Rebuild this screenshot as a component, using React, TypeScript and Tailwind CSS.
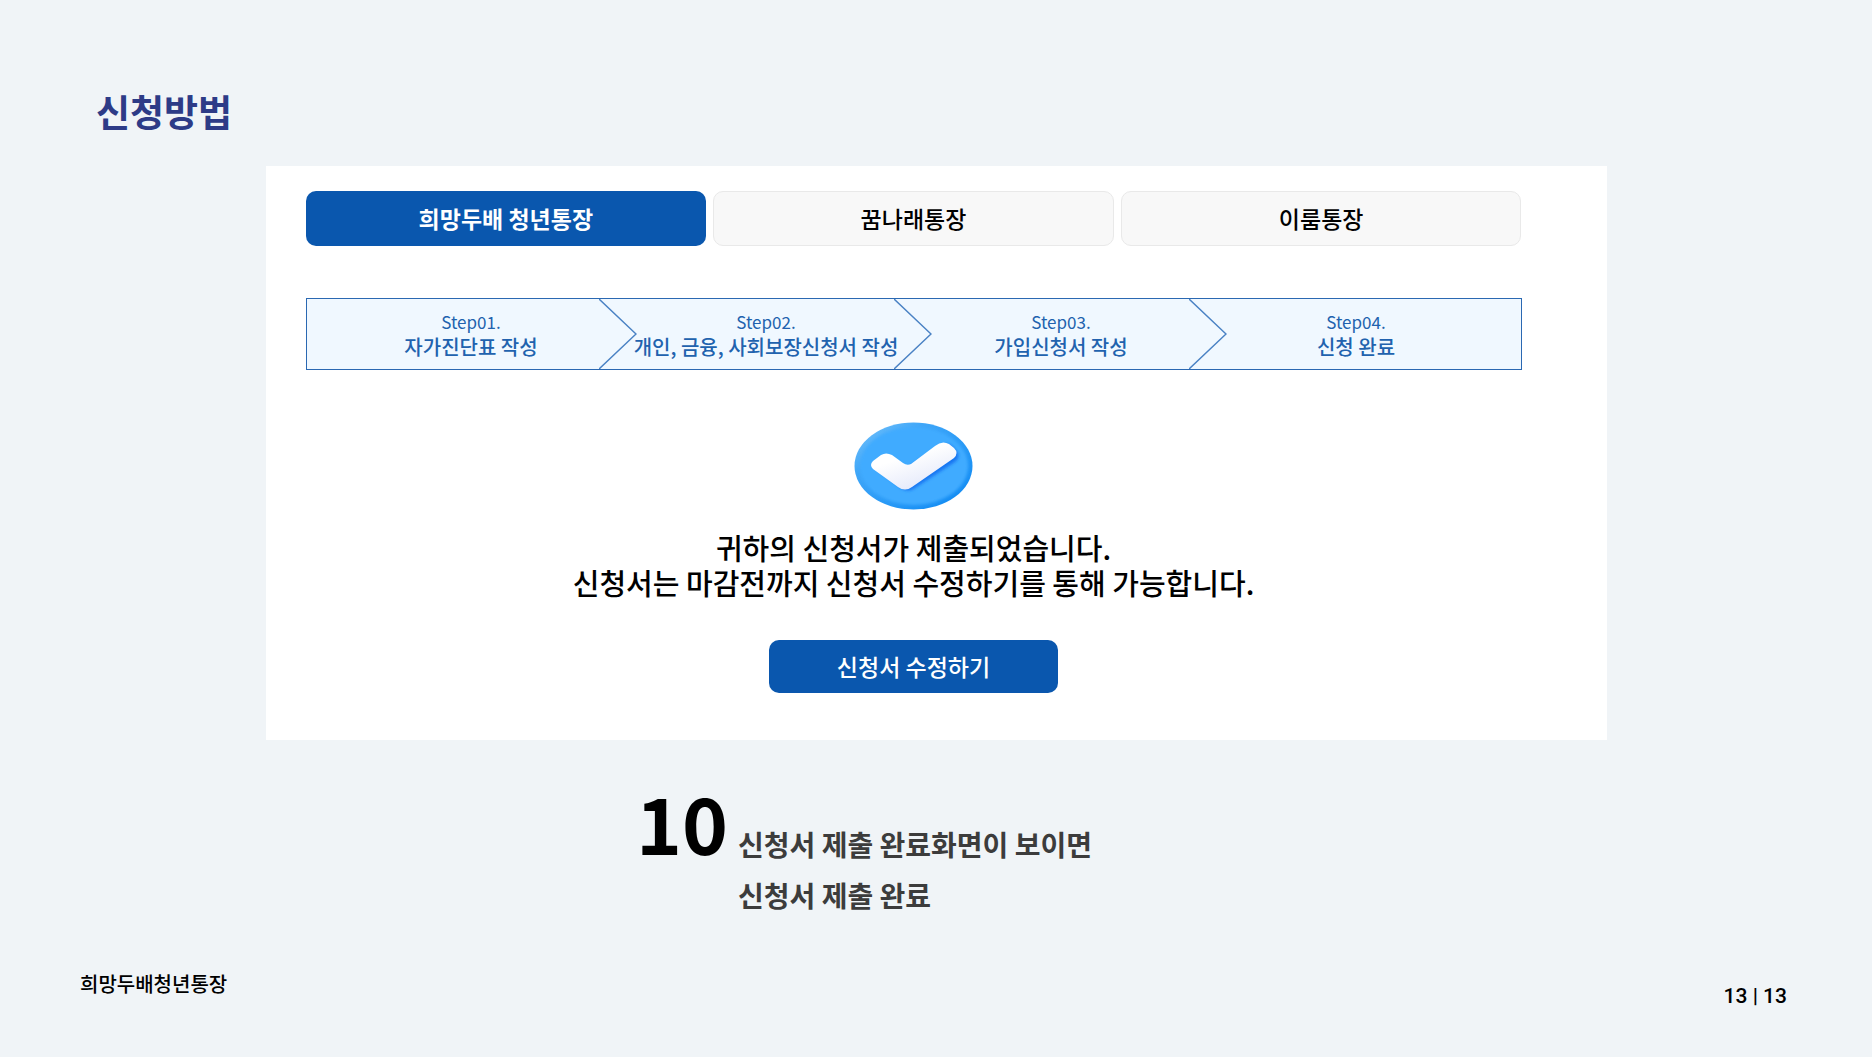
const accounts = ['희망두배 청년통장', '꿈나래통장', '이룸통장'];

const steps = [
  { no: 'Step01.', label: '자가진단표 작성' },
  { no: 'Step02.', label: '개인, 금융, 사회보장신청서 작성' },
  { no: 'Step03.', label: '가입신청서 작성' },
  { no: 'Step04.', label: '신청 완료' },
];

function CheckBadge() {
  return (
    <svg viewBox="0 0 119 88" className="w-[119px] h-[88px]" aria-hidden="true">
      <defs>
        <linearGradient id="rim" x1="0" y1="0" x2="1" y2="1">
          <stop offset="0" stopColor="#7cc6fb" />
          <stop offset="0.3" stopColor="#3fa6f8" />
          <stop offset="0.75" stopColor="#1e93f5" />
          <stop offset="1" stopColor="#0a86f0" />
        </linearGradient>
        <linearGradient id="tick" x1="0" y1="0" x2="0.6" y2="1">
          <stop offset="0.4" stopColor="#ffffff" />
          <stop offset="1" stopColor="#e3e8fa" />
        </linearGradient>
        <filter id="soft" x="-10%" y="-10%" width="120%" height="120%">
          <feGaussianBlur stdDeviation="1.8" />
        </filter>
      </defs>
      <ellipse cx="59.5" cy="44" rx="59" ry="43.5" fill="url(#rim)" />
      <ellipse cx="60" cy="44" rx="54" ry="39" fill="#40abff" filter="url(#soft)" />
      <path
        d="M25 39 L31 34 Q35 33 38 36 L53 46 L86 24 Q93 20 98 24 L104 31 Q106 36 101 40 L61 66 Q54 71 47 66 L25 49 Q20 44 25 39 Z"
        fill="#1877f2"
        filter="url(#soft)"
      />
      <path
        d="M19 39 L27 33 Q32 30 38 33 L49 41 Q53 44 57 42 L81 24 Q88 18 95 22 L100 26 Q105 31 100 36 L58 65 Q51 70 44 65 L19 47 Q15 43 19 39 Z"
        fill="url(#tick)"
      />
    </svg>
  );
}

export default function App() {
  return (
    <div className="min-h-screen flex flex-col bg-[#f0f4f7] text-black font-['Noto_Sans_CJK_KR',sans-serif]">
      <header className="px-24 pt-[84px]">
        <h1 className="text-[37px] leading-[54px] font-bold text-[#2d3b87]">신청방법</h1>
      </header>

      <main className="px-8 mt-7">
        <section className="w-full max-w-[1341px] mx-auto bg-white pt-[25px] pb-[47px] pl-10 pr-[85px]">
          {/* Account tabs */}
          <div className="grid grid-cols-3 gap-[7px]">
            {accounts.map((name, i) => (
              <button
                key={name}
                type="button"
                className={
                  i === 0
                    ? 'h-[55px] rounded-[10px] bg-[#0a57ae] text-white text-[23px] font-bold'
                    : 'h-[55px] rounded-[10px] bg-[#f8f8f8] border border-[#e9e9e9] text-[23px] font-medium'
                }
              >
                {name}
              </button>
            ))}
          </div>

          {/* Progress steps */}
          <ol className="grid grid-cols-4 mt-[52px] h-[72px] px-[17px] border border-[#2a68b2] bg-[#f0f8ff]">
            {steps.map((step, i) => (
              <li
                key={step.no}
                className="relative flex flex-col items-center justify-center text-[#2162ae] whitespace-nowrap"
              >
                <span className="text-[17px] leading-[25px]">{step.no}</span>
                <span className="text-[20px] leading-[25px] font-medium">{step.label}</span>
                {i < steps.length - 1 && (
                  <svg
                    viewBox="0 0 38 70"
                    className="absolute top-0 -right-[18px] w-[38px] h-[70px]"
                    fill="none"
                    stroke="#4a82c4"
                    strokeWidth="1.5"
                    aria-hidden="true"
                  >
                    <path d="M0 0 L37 35 L0 70" />
                  </svg>
                )}
              </li>
            ))}
          </ol>

          {/* Result */}
          <div className="flex flex-col items-center mt-[52px]">
            <CheckBadge />
            <p className="mt-5 text-[29px] leading-[35px] font-medium text-center">
              귀하의 신청서가 제출되었습니다.
              <br />
              신청서는 마감전까지 신청서 수정하기를 통해 가능합니다.
            </p>
            <button
              type="button"
              className="mt-10 w-[289px] h-[53px] rounded-[10px] bg-[#0a57ae] text-white text-[23px] font-medium"
            >
              신청서 수정하기
            </button>
          </div>
        </section>

        <div className="flex items-start gap-2.5 w-full max-w-[600px] mx-auto mt-[42px]">
          <span className="text-[78px] leading-[78px] font-bold">10</span>
          <p className="pt-[37px] text-[28px] leading-[51px] font-bold text-[#3c3c3c]">
            신청서 제출 완료화면이 보이면
            <br />
            신청서 제출 완료
          </p>
        </div>
      </main>

      <footer className="mt-auto flex items-start justify-between pl-20 pr-[85px] pb-[46px]">
        <span className="text-[20px] leading-[30px] font-medium">희망두배청년통장</span>
        <span className="mt-3 text-[21px] leading-[30px] font-medium font-[Roboto,sans-serif]">13 | 13</span>
      </footer>
    </div>
  );
}
